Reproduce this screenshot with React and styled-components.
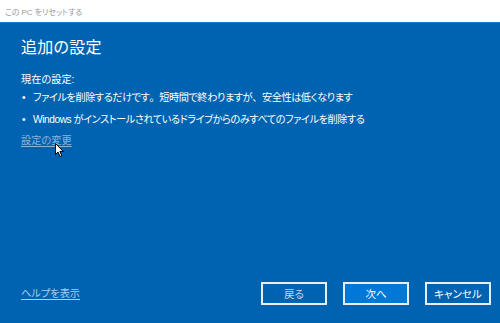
import React from "react";
import styled, { createGlobalStyle } from "styled-components";

const Global = createGlobalStyle`
  html, body { margin: 0; padding: 0; overflow: hidden; }
  body { font-family: "Liberation Sans", "Noto Sans CJK JP", sans-serif; }
`;

const Window = styled.div`
  width: 500px;
  height: 323px;
  display: flex;
  flex-direction: column;
  position: relative;
  font-feature-settings: "palt";
`;

const TitleBar = styled.div`
  height: 22px;
  flex: none;
  background: #ffffff;
  display: flex;
  align-items: center;
  padding-left: 5px;
  font-size: 8px;
  letter-spacing: -0.1px;
  color: #9a9a9a;
`;

const Body = styled.div`
  flex: 1;
  background: #0063b1;
  border-top: 1px solid #1f7fcb;
  display: flex;
  flex-direction: column;
  padding: 14px 9px 18px 21px;
  color: #ffffff;
  font-size: 10.2px;
  line-height: 16px;
`;

const Heading = styled.h1`
  margin: 0;
  font-size: 16px;
  font-weight: 400;
  line-height: 22px;
  letter-spacing: 0.3px;
`;

const Label = styled.div`
  margin-top: 13px;
`;

const List = styled.ul`
  list-style: none;
  margin: 2px 0 0;
  padding: 0;
  display: flex;
  flex-direction: column;
  gap: 6px;
`;

const Item = styled.li`
  display: flex;
  letter-spacing: -0.45px;
  &::before {
    content: "•";
    width: 11px;
    flex: none;
    padding-left: 1px;
  }
`;

const Punct = styled.span`
  font-feature-settings: normal;
`;

const Link = styled.a`
  color: ${(p) => p.$color};
  text-decoration: underline;
  text-underline-offset: 2px;
  cursor: pointer;
`;

const LinkRow = styled.div`
  margin-top: 5px;
  position: relative;
`;

const Spacer = styled.div`
  flex: 1;
`;

const Footer = styled.div`
  display: flex;
  align-items: center;
`;

const Buttons = styled.div`
  margin-left: auto;
  display: flex;
  gap: 16px;
`;

const Button = styled.button`
  width: 66px;
  height: 23px;
  box-sizing: border-box;
  border: 2px solid #e6eef6;
  background: ${(p) => (p.$primary ? "#0078d7" : "#0063b1")};
  color: ${(p) => (p.$dim ? "#c4d8ec" : "#ffffff")};
  font-family: inherit;
  font-feature-settings: "palt";
  font-size: 10.5px;
  padding: 0;
`;

const Cursor = styled.svg`
  position: absolute;
  left: 34px;
  top: 10px;
`;

export default function App() {
  return (
    <Window>
      <Global />
      <TitleBar>この PC をリセットする</TitleBar>
      <Body>
        <Heading>追加の設定</Heading>
        <Label>現在の設定:</Label>
        <List>
          <Item>
            ファイルを削除するだけです<Punct>。</Punct>短時間で終わりますが<Punct>、</Punct>安全性は低くなります
          </Item>
          <Item>Windows がインストールされているドライブからのみすべてのファイルを削除する</Item>
        </List>
        <LinkRow>
          <Link $color="#8db3d8">設定の変更</Link>
          <Cursor width="10" height="15" viewBox="0 0 10 15">
            <path d="M0.5 0.5 L0.5 11.5 L3 9 L5 13.5 L6.8 12.7 L4.9 8.4 L8.3 8.4 Z" fill="#ffffff" stroke="#000000" strokeWidth="1" strokeLinejoin="miter" />
          </Cursor>
        </LinkRow>
        <Spacer />
        <Footer>
          <Link $color="#a6cff2">ヘルプを表示</Link>
          <Buttons>
            <Button $dim>戻る</Button>
            <Button $primary>次へ</Button>
            <Button>キャンセル</Button>
          </Buttons>
        </Footer>
      </Body>
    </Window>
  );
}
